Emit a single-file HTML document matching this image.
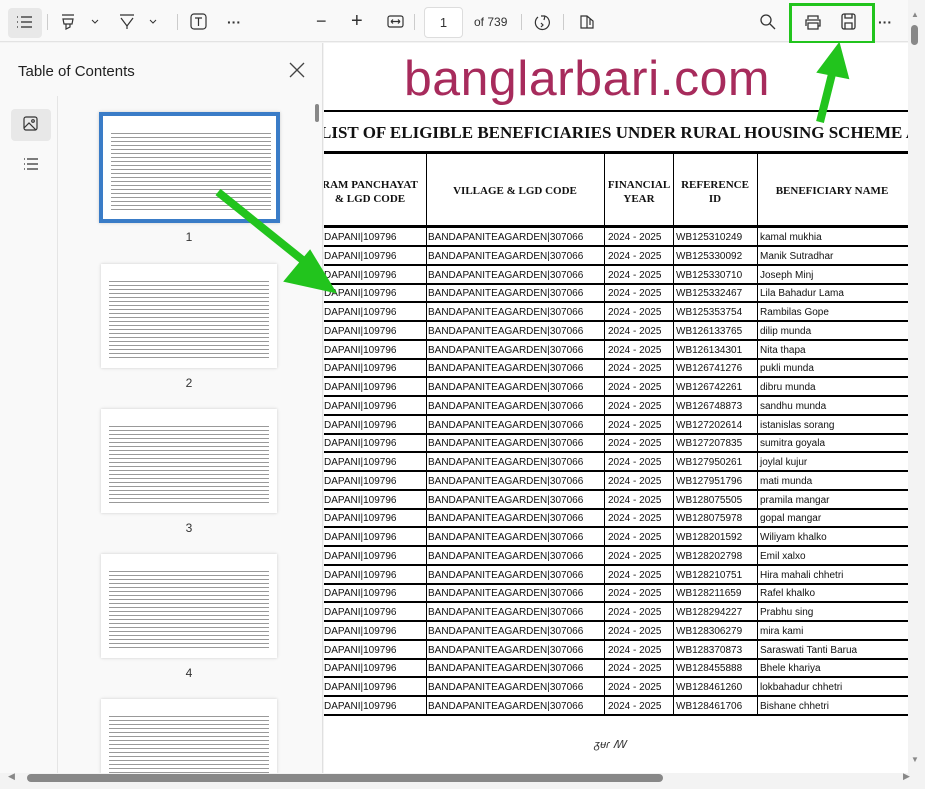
<!DOCTYPE html>
<html><head><meta charset="utf-8"><style>
*{margin:0;padding:0;box-sizing:border-box}
body{width:925px;height:789px;overflow:hidden;background:#f3f3f3;font-family:"Liberation Sans",sans-serif;position:relative}
.tb{position:absolute;left:0;top:0;width:925px;height:42px;background:#f9f9f9;border-bottom:1px solid #e3e3e3}
.ic{position:absolute;color:#333;font-size:14px}
.side{position:absolute;left:0;top:43px;width:323px;height:730px;background:#f9f9f9;border-right:1px solid #e0e0e0}
.rail{position:absolute;left:0;top:96px;width:58px;height:680px;border-right:1px solid #e5e5e5}
.doc{position:absolute;left:324px;top:43px;width:584px;height:730px;background:#fff;overflow:hidden}
.thumb{position:absolute;left:101px;width:176px;height:104px;background:#fff;box-shadow:0 0 3px #ccc;
background-image:repeating-linear-gradient(#fff 0 3px,#999 3px 4px);background-size:160px 80px;background-position:8px 14px;background-repeat:no-repeat}
.num{position:absolute;width:176px;left:101px;text-align:center;font-size:12px;color:#333}
.row{position:absolute;left:0;width:584px;height:19px;border-bottom:2px solid #000;font-size:10px;color:#111;font-family:"Liberation Sans Narrow","Liberation Sans",sans-serif}
.row span{position:absolute;top:4px}
.vl{position:absolute;top:152px;height:563px;width:1px;background:#000}
.hd{position:absolute;font-family:"Liberation Serif",serif;font-weight:bold;font-size:11px;text-align:center;line-height:14px;color:#111}
</style></head><body>
<div class="tb">
 <div style="position:absolute;left:8px;top:8px;width:34px;height:30px;background:#e8e8e8;border-radius:4px"></div>
 <svg style="position:absolute;left:16px;top:15px" width="18" height="14"><g stroke="#333" stroke-width="1.3"><line x1="1" y1="2" x2="2" y2="2"/><line x1="5" y1="2" x2="16" y2="2"/><line x1="1" y1="7" x2="2" y2="7"/><line x1="5" y1="7" x2="16" y2="7"/><line x1="1" y1="12" x2="2" y2="12"/><line x1="5" y1="12" x2="16" y2="12"/></g></svg>
 <div style="position:absolute;left:47px;top:14px;width:1px;height:16px;background:#ccc"></div>
 <svg style="position:absolute;left:60px;top:13px" width="44" height="18" fill="none" stroke="#333" stroke-width="1.2"><path d="M2 2h12M3 6h10l-1 5H4zM6 11v5l4-2v-3"/><path d="M32 7l3 3 3-3" stroke-width="1"/></svg>
 <svg style="position:absolute;left:118px;top:13px" width="44" height="18" fill="none" stroke="#333" stroke-width="1.2"><path d="M2 2h14M3 5l6 8 6-8M9 13v3"/><path d="M32 7l3 3 3-3" stroke-width="1"/></svg>
 <div style="position:absolute;left:177px;top:14px;width:1px;height:16px;background:#ccc"></div>
 <svg style="position:absolute;left:190px;top:13px" width="18" height="18" fill="none" stroke="#333" stroke-width="1.2"><rect x="1" y="1" width="15" height="15" rx="3"/><path d="M5 5h7M8.5 5v8"/></svg>
 <div class="ic" style="left:227px;top:14px;font-weight:bold">···</div>
 <div class="ic" style="left:316px;top:11px;font-size:18px">−</div>
 <div class="ic" style="left:351px;top:10px;font-size:20px">+</div>
 <svg style="position:absolute;left:387px;top:15px" width="18" height="14" fill="none" stroke="#333" stroke-width="1.2"><rect x="1" y="1" width="15" height="11" rx="2"/><path d="M4 6.5h9M4 6.5l2-2M4 6.5l2 2M13 6.5l-2-2M13 6.5l-2 2"/></svg>
 <div style="position:absolute;left:414px;top:14px;width:1px;height:16px;background:#ccc"></div>
 <div style="position:absolute;left:424px;top:7px;width:39px;height:31px;background:#fff;border:1px solid #ddd;border-radius:4px;font-size:13px;text-align:center;line-height:29px;color:#333">1</div>
 <div class="ic" style="left:474px;top:15px;font-size:12px">of 739</div>
 <div style="position:absolute;left:521px;top:14px;width:1px;height:16px;background:#ccc"></div>
 <svg style="position:absolute;left:533px;top:13px" width="18" height="20" fill="none" stroke="#333" stroke-width="1.2"><path d="M5 4A7 7 0 1 0 12 3M12 3l-1 4M12 3l-4 0"/><path d="M8 10l2 2-2 2" /></svg>
 <div style="position:absolute;left:563px;top:14px;width:1px;height:16px;background:#ccc"></div>
 <svg style="position:absolute;left:578px;top:14px" width="18" height="16" fill="none" stroke="#333" stroke-width="1.2"><path d="M3 2h6l6 5v7H3zM9 2v12M12 5v6"/></svg>
 <svg style="position:absolute;left:760px;top:14px" width="16" height="16" fill="none" stroke="#333" stroke-width="1.3"><circle cx="6" cy="6" r="5"/><path d="M10 10l5 5"/></svg>
 <div style="position:absolute;left:789px;top:3px;width:86px;height:41px;border:3px solid #22c41d"></div>
 <svg style="position:absolute;left:804px;top:14px" width="18" height="16" fill="none" stroke="#333" stroke-width="1.3"><path d="M4 5V2h10v3M2 12V6h14v6h-2M4 9h10v6H4z"/></svg>
 <svg style="position:absolute;left:841px;top:13px" width="16" height="18" fill="none" stroke="#333" stroke-width="1.3"><rect x="1" y="1" width="13" height="15" rx="2"/><path d="M4 1v4h7V1M4 16v-6h7v6"/></svg>
 <div class="ic" style="left:878px;top:14px;font-weight:bold">···</div>
</div>
<div class="side">
 <div style="position:absolute;left:18px;top:20px;font-size:15px;color:#222">Table of Contents</div>
 <svg style="position:absolute;left:289px;top:19px" width="16" height="16" stroke="#444" stroke-width="1.3"><path d="M1 1l14 14M15 1L1 15"/></svg>
</div>
<div class="rail"></div>
<div style="position:absolute;left:11px;top:109px;width:40px;height:32px;background:#e8e8e8;border-radius:4px"></div>
<svg style="position:absolute;left:23px;top:116px" width="16" height="16" fill="none" stroke="#333" stroke-width="1.2"><rect x="1" y="1" width="13" height="13" rx="2"/><circle cx="10" cy="5" r="1.3"/><path d="M1 12l5-5 7 7"/></svg>
<svg style="position:absolute;left:23px;top:157px" width="16" height="14" stroke="#333" stroke-width="1.2"><path d="M1 2h1M4 2h11M1 7h1M4 7h11M1 12h1M4 12h11"/></svg>
<div style="position:absolute;left:315px;top:104px;width:4px;height:18px;background:#888;border-radius:2px"></div>
<div class="thumb" style="top:112px;left:99px;width:181px;height:111px;border:4px solid #3a7cc7"></div>
<div class="num" style="top:230px">1</div>
<div class="thumb" style="top:264px"></div><div class="num" style="top:376px">2</div>
<div class="thumb" style="top:409px"></div><div class="num" style="top:521px">3</div>
<div class="thumb" style="top:554px"></div><div class="num" style="top:666px">4</div>
<div class="thumb" style="top:699px;height:75px"></div>

<div class="doc">
 <div style="position:absolute;left:80px;top:8px;font-size:49px;color:#a72b5c;letter-spacing:.5px;transform:scaleX(1.02);transform-origin:left">banglarbari.com</div>
 <div style="position:absolute;left:0;top:67px;width:584px;height:2px;background:#000"></div>
 <div style="position:absolute;left:-4px;top:80px;white-space:nowrap;font-family:'Liberation Serif',serif;font-weight:bold;font-size:17px;color:#111">LIST OF ELIGIBLE BENEFICIARIES UNDER RURAL HOUSING SCHEME A</div>
 <div style="position:absolute;left:0;top:108px;width:584px;height:3px;background:#000"></div>
</div>
<div id="t" style="position:absolute;left:324px;top:0;width:584px;height:773px;overflow:hidden">
 <div class="vl" style="left:102px"></div><div class="vl" style="left:280px"></div><div class="vl" style="left:349px"></div><div class="vl" style="left:433px"></div>
 <div class="hd" style="left:-10px;top:178px;width:112px">RAM PANCHAYAT<br>&amp; LGD CODE</div>
 <div class="hd" style="left:102px;top:184px;width:178px">VILLAGE &amp; LGD CODE</div>
 <div class="hd" style="left:280px;top:178px;width:70px">FINANCIAL<br>YEAR</div>
 <div class="hd" style="left:349px;top:178px;width:84px">REFERENCE<br>ID</div>
 <div class="hd" style="left:433px;top:184px;width:150px">BENEFICIARY NAME</div>
 <div style="position:absolute;left:0;top:225px;width:584px;height:3px;background:#000"></div>
 <div id="rows"></div>
 <div style="position:absolute;left:270px;top:738px;font-size:11px;color:#333;font-style:italic">ᵹᵾɾ ꟿ</div>
</div>
<script>
var ids=["WB125310249","WB125330092","WB125330710","WB125332467","WB125353754","WB126133765","WB126134301","WB126741276","WB126742261","WB126748873","WB127202614","WB127207835","WB127950261","WB127951796","WB128075505","WB128075978","WB128201592","WB128202798","WB128210751","WB128211659","WB128294227","WB128306279","WB128370873","WB128455888","WB128461260","WB128461706"];
var nm=["kamal mukhia","Manik Sutradhar","Joseph Minj","Lila Bahadur Lama","Rambilas Gope","dilip munda","Nita thapa","pukli munda","dibru munda","sandhu munda","istanislas sorang","sumitra goyala","joylal kujur","mati munda","pramila mangar","gopal mangar","Wiliyam khalko","Emil xalxo","Hira mahali chhetri","Rafel khalko","Prabhu sing","mira kami","Saraswati Tanti Barua","Bhele khariya","lokbahadur chhetri","Bishane chhetri"];
var h="";for(var i=0;i<26;i++){var t=228+i*18.75;h+='<div class="row" style="top:'+t+'px"><span style="left:0">DAPANI|109796</span><span style="left:104px">BANDAPANITEAGARDEN|307066</span><span style="left:284px">2024 - 2025</span><span style="left:352px">'+ids[i]+'</span><span style="left:436px">'+nm[i]+'</span></div>';}
document.getElementById("rows").innerHTML=h;
</script>
<div style="position:absolute;left:908px;top:0;width:17px;height:789px;background:#f3f3f3"></div>
<div style="position:absolute;left:911px;top:25px;width:7px;height:20px;background:#888;border-radius:4px"></div>
<div style="position:absolute;left:911px;top:10px;font-size:8px;color:#888">▲</div>
<div style="position:absolute;left:911px;top:755px;font-size:8px;color:#888">▼</div>
<div style="position:absolute;left:0;top:773px;width:925px;height:16px;background:#f3f3f3"></div>
<div style="position:absolute;left:27px;top:774px;width:636px;height:8px;background:#888;border-radius:4px"></div>
<div style="position:absolute;left:8px;top:771px;font-size:9px;color:#888">◀</div>
<div style="position:absolute;left:903px;top:771px;font-size:9px;color:#888">▶</div>
<svg style="position:absolute;left:0;top:0" width="925" height="789">
 <g fill="#22c41d" stroke="#22c41d">
  <line x1="218" y1="192" x2="305" y2="262" stroke-width="8"/>
  <polygon points="335,292 285,281 310,251" stroke-width="2"/>
  <line x1="820" y1="122" x2="833" y2="70" stroke-width="8"/>
  <polygon points="839,44 848,78 818,72" stroke-width="2"/>
 </g>
</svg>
</body></html>
